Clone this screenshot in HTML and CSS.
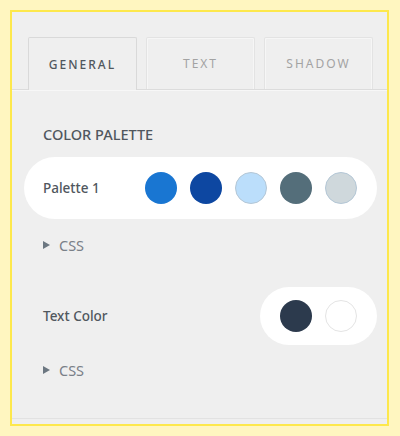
FILE: index.html
```html
<!DOCTYPE html>
<html>
<head>
<meta charset="utf-8">
<link rel="stylesheet" href="styles.css">
</head>
<body>
<div class="frame">
  <div class="panel">
    <div class="tabs">
      <div class="tab active">GENERAL</div>
      <div class="tab">TEXT</div>
      <div class="tab">SHADOW</div>
    </div>
    <div class="content">
      <div class="section-title">COLOR PALETTE</div>
      <div class="pill palette">
        <span class="pill-label">Palette 1</span>
        <div class="swatches">
          <span class="swatch" style="background:#1976d2"></span>
          <span class="swatch" style="background:#0d47a1"></span>
          <span class="swatch light" style="background:#bbdefb"></span>
          <span class="swatch" style="background:#546e7a"></span>
          <span class="swatch light" style="background:#cfd8dc"></span>
        </div>
      </div>
      <div class="css-toggle"><span class="tri"></span><span>CSS</span></div>
      <div class="row">
        <span class="row-label">Text Color</span>
        <div class="pill small">
          <div class="swatches">
            <span class="swatch" style="background:#2c3a4d"></span>
            <span class="swatch white" style="background:#ffffff"></span>
          </div>
        </div>
      </div>
      <div class="css-toggle second"><span class="tri"></span><span>CSS</span></div>
    </div>
    <div class="bottom-line"></div>
  </div>
</div>
</body>
</html>
```

FILE: styles.css
```css
html, body {
  margin: 0;
  padding: 0;
  background: #fff6c0;
  font-family: "Noto Sans", "Open Sans", sans-serif;
}
.frame {
  margin: 10px;
  width: 375px;
  height: 412px;
  border: 2px solid #fde84c;
}
.panel {
  background: #efefef;
  height: 100%;
  display: flex;
  flex-direction: column;
}
.tabs {
  display: flex;
  gap: 9px;
  padding: 25px 0 0 16px;
  border-bottom: 1px solid #dcdcdc;
  box-shadow: 0 1px 0 #f7f7f7;
}
.tab {
  width: 107px;
  height: 51px;
  border: 1px solid #e3e3e3;
  border-bottom: none;
  border-radius: 2px 2px 0 0;
  box-shadow: inset 1px 1px 0 #f6f6f6, inset -1px 0 0 #f6f6f6;
  display: flex;
  align-items: center;
  justify-content: center;
  font-size: 12px;
  letter-spacing: 2px;
  color: #a3a3a3;
}
.tab.active {
  border-color: #d9d9d9;
  color: #50575e;
  font-weight: 500;
  background: #efefef;
  margin-bottom: -1px;
  height: 52px;
  box-shadow: none;
}
.content {
  padding: 0 10px 0 12px;
  display: flex;
  flex-direction: column;
}
.section-title {
  margin: 34px 0 0 19px;
  line-height: 20px;
  font-size: 14.5px;
  font-weight: 500;
  color: #50575e;
}
.pill {
  background: #ffffff;
  border-radius: 31px;
  display: flex;
  align-items: center;
}
.palette {
  margin-top: 13px;
  height: 62px;
  padding: 0 20px 0 19px;
  justify-content: space-between;
}
.pill-label, .row-label {
  font-size: 13.5px;
  color: #50575e;
  font-weight: 500;
}
.swatches {
  display: flex;
  gap: 13px;
}
.swatch {
  width: 32px;
  height: 32px;
  border-radius: 50%;
  box-sizing: border-box;
  display: block;
}
.swatch.light {
  border: 1px solid #b4c7d6;
}
.swatch.white {
  border: 1px solid #e4e4e4;
}
.css-toggle {
  margin: 16px 0 0 19px;
  line-height: 20px;
  display: flex;
  align-items: center;
  gap: 9px;
  font-size: 14.5px;
  color: #7a8088;
}
.tri {
  width: 0;
  height: 0;
  border-top: 4.5px solid transparent;
  border-bottom: 4.5px solid transparent;
  border-left: 7px solid #6c7781;
}
.row {
  margin-top: 32px;
  display: flex;
  align-items: center;
  justify-content: space-between;
  padding-left: 19px;
}
.pill.small {
  height: 58px;
  padding: 0 20px;
  border-radius: 29px;
}
.css-toggle.second {
  margin-top: 15px;
}
.bottom-line {
  margin-top: auto;
  margin-bottom: 5px;
  border-top: 1px solid #e2e2e2;
}
```
